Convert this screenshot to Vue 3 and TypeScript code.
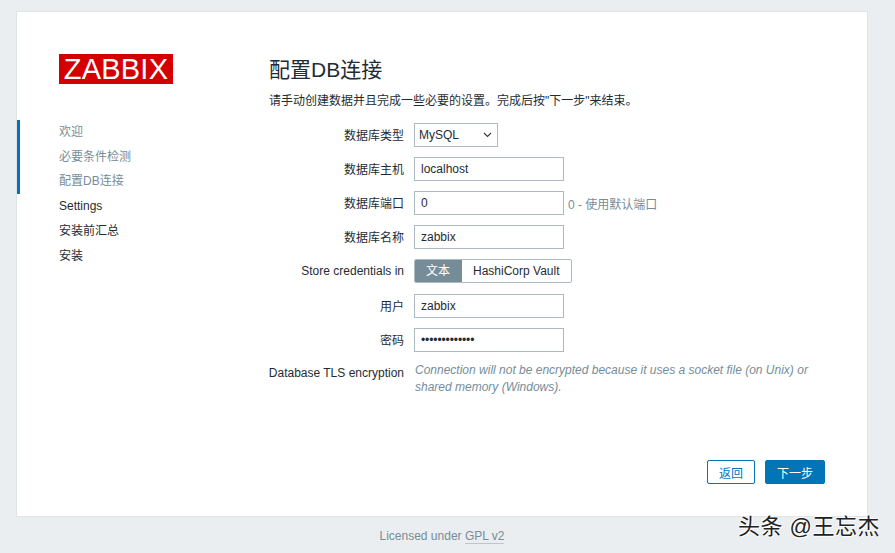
<template>
  <div class="page">
    <div class="card">
      <aside class="sidebar">
        <div class="logo">ZABBIX</div>
        <ul class="steps">
          <li v-for="(step, i) in steps" :key="step" :class="{ done: i < current }">{{ step }}</li>
        </ul>
      </aside>
      <main class="main">
        <h1 class="title">配置DB连接</h1>
        <p class="intro">请手动创建数据并且完成一些必要的设置。完成后按"下一步"来结束。</p>
        <div class="form">
          <div class="row">
            <label>数据库类型</label>
            <div class="fake-select">
              <span>MySQL</span>
              <svg width="9" height="6" viewBox="0 0 9 6"><path d="M1 1l3.5 3.5L8 1" fill="none" stroke="#383838" stroke-width="1.1" /></svg>
            </div>
          </div>
          <div v-for="f in topFields" :key="f.label" class="row">
            <label>{{ f.label }}</label>
            <div class="input">{{ f.value }}</div>
            <span v-if="f.hint" class="hint">{{ f.hint }}</span>
          </div>
          <div class="row row--toggle">
            <label>Store credentials in</label>
            <div class="toggle">
              <span class="opt opt--on">文本</span>
              <span class="opt">HashiCorp Vault</span>
            </div>
          </div>
          <div class="row">
            <label>用户</label>
            <div class="input">zabbix</div>
          </div>
          <div class="row">
            <label>密码</label>
            <div class="input input--pass">•••••••••••••</div>
          </div>
          <div class="row row--text">
            <label>Database TLS encryption</label>
            <p class="note">Connection will not be encrypted because it uses a socket file (on Unix) or shared memory (Windows).</p>
          </div>
        </div>
        <div class="actions">
          <button class="btn btn--alt">返回</button>
          <button class="btn btn--primary">下一步</button>
        </div>
      </main>
    </div>
    <footer class="footer">Licensed under <a class="gpl">GPL v2</a></footer>
    <div class="watermark">头条 @王忘杰</div>
  </div>
</template>

<script setup lang="ts">
const steps = ['欢迎', '必要条件检测', '配置DB连接', 'Settings', '安装前汇总', '安装']
const current = 3

const topFields = [
  { label: '数据库主机', value: 'localhost', hint: '' },
  { label: '数据库端口', value: '0', hint: '0 - 使用默认端口' },
  { label: '数据库名称', value: 'zabbix', hint: '' }
]
</script>

<style>
html,
body {
  margin: 0;
  background: #ebeef0;
}
</style>

<style scoped>
.page {
  position: relative;
  height: 553px;
  box-sizing: border-box;
  padding: 11px 27px 0 16px;
  overflow: hidden;
  background: #ebeef0;
  font-family: 'Liberation Sans', 'Noto Sans CJK SC', sans-serif;
  font-size: 12px;
  color: #1f2c33;
}

.card {
  display: flex;
  height: 506px;
  box-sizing: border-box;
  background: #fff;
  border: 1px solid #dfe4e7;
}

.sidebar {
  width: 252px;
  flex: none;
}

.logo {
  width: 114px;
  height: 30px;
  margin: 42px 0 0 42px;
  background: #d40000;
  color: #fff;
  font-size: 29px;
  line-height: 30px;
  text-align: center;
  letter-spacing: 0.2px;
}

.steps {
  list-style: none;
  margin: 36px 0 0;
  padding: 0;
  line-height: 24.7px;
}

.steps li {
  padding-left: 42px;
  border-left: 3px solid transparent;
  text-indent: -3px;
}

.steps li.done {
  color: #768d99;
  border-left-color: #0275b8;
}

.main {
  flex: 1;
  display: flex;
  flex-direction: column;
  padding-right: 42px;
}

.title {
  margin: 42px 0 0;
  font-size: 21px;
  font-weight: 400;
  line-height: 32px;
}

.intro {
  margin: 6px 0 0;
  line-height: 18px;
}

.form {
  margin-top: 13px;
  display: flex;
  flex-direction: column;
  gap: 10px;
}

.row {
  display: flex;
  align-items: center;
  height: 24px;
}

.row--toggle {
  height: 25px;
  align-items: flex-start;
}

.row--toggle label {
  line-height: 24px;
}

.row--text {
  height: auto;
  align-items: flex-start;
}

.row label {
  width: 136px;
  flex: none;
  margin-left: -1px;
  margin-right: 10px;
  padding-bottom: 2px;
  text-align: right;
  white-space: nowrap;
}

.row--text label {
  line-height: 22px;
}

.input {
  width: 150px;
  height: 24px;
  box-sizing: border-box;
  border: 1px solid #acbbc2;
  padding: 0 6px;
  line-height: 22px;
}

.input--pass {
  letter-spacing: -0.1px;
}

.fake-select {
  display: flex;
  align-items: center;
  justify-content: space-between;
  width: 84px;
  height: 24px;
  box-sizing: border-box;
  border: 1px solid #acbbc2;
  padding: 0 5px 0 4px;
}

.hint {
  margin-left: 4px;
  color: #768d99;
}

.toggle {
  display: flex;
  height: 24px;
  box-sizing: border-box;
  border: 1px solid #acbbc2;
  border-radius: 2px;
  overflow: hidden;
}

.opt {
  padding: 0 11px;
  line-height: 22px;
}

.opt--on {
  padding-right: 12px;
  background: #768d99;
  color: #fff;
}

.note {
  margin: 0 0 0 1px;
  width: 405px;
  line-height: 17px;
  font-style: italic;
  color: #768d99;
}

.actions {
  margin-top: auto;
  margin-bottom: 32px;
  display: flex;
  justify-content: flex-end;
  gap: 10px;
}

.btn {
  height: 24px;
  box-sizing: border-box;
  border: 1px solid #0275b8;
  border-radius: 2px;
  font: inherit;
  padding: 0;
}

.btn--alt {
  width: 48px;
  background: #fff;
  color: #0275b8;
}

.btn--primary {
  width: 60px;
  background: #0275b8;
  color: #fff;
}

.footer {
  margin-top: 11px;
  text-align: center;
  color: #768d99;
  line-height: 16px;
}

.gpl {
  border-bottom: 1px solid #bcc6cc;
}

.watermark {
  position: absolute;
  left: 738px;
  top: 512px;
  font-size: 22px;
  letter-spacing: 0.5px;
  line-height: 30px;
  color: #222;
  text-shadow: 0 0 2px #fff, 1px 1px 1px #fff, -1px -1px 1px #fff;
}
</style>
